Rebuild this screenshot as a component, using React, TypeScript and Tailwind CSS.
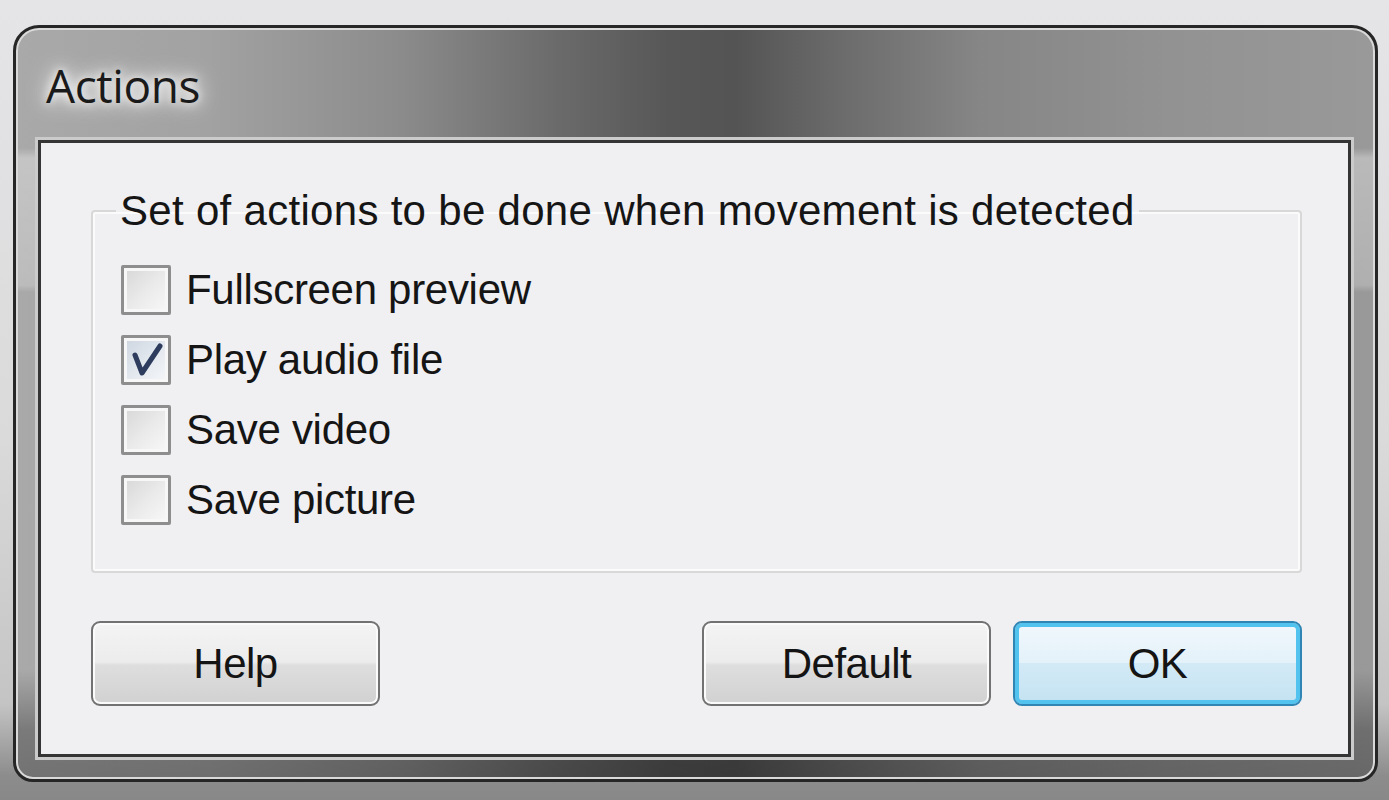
import clsx from "clsx";
import type { ReactNode } from "react";

const ui = "font-['Liberation_Sans',Arial,sans-serif]";

function CheckBox({ checked }: { checked?: boolean }) {
  return (
    <span className="flex h-[50px] w-[50px] shrink-0 rounded-[2px] border-[3px] border-[#8e8e8e] bg-[#f7f7f7] p-[3px]">
      <span
        className={clsx(
          "flex h-full w-full items-center justify-center",
          checked
            ? "bg-[linear-gradient(135deg,#cfd7e1_0%,#e4e9ef_55%,#f3f5f8_100%)]"
            : "bg-[linear-gradient(135deg,#d9d9d9_0%,#ebebeb_55%,#f6f6f6_100%)]"
        )}
      >
        {checked && (
          <svg viewBox="0 0 38 38" className="h-full w-full">
            <path
              d="M8 14 L15 32 L33 5"
              fill="none"
              stroke="#2e3d5e"
              strokeWidth="5"
              strokeLinecap="round"
              strokeLinejoin="round"
            />
          </svg>
        )}
      </span>
    </span>
  );
}

function Option({ label, checked }: { label: string; checked?: boolean }) {
  return (
    <label className="flex h-[70px] items-center gap-[15px]">
      <CheckBox checked={checked} />
      <span className="text-[42px] leading-none tracking-[-0.3px] text-[#151515]">{label}</span>
    </label>
  );
}

function DialogButton({ children, primary }: { children: ReactNode; primary?: boolean }) {
  return (
    <button
      type="button"
      className={clsx(
        "flex h-[85px] w-[289px] items-center justify-center rounded-[9px] border-2 text-[42px] leading-none tracking-[-0.5px] text-[#141414]",
        primary
          ? "border-[#2f86b5] bg-[linear-gradient(to_bottom,#f1f8fc_0%,#e3f1f9_50%,#d3eaf6_50%,#c4e2f2_100%)] shadow-[inset_0_0_0_4px_#52c3ee]"
          : "border-[#727272] bg-[linear-gradient(to_bottom,#f4f4f4_0%,#ececec_48%,#dedede_52%,#d1d1d1_100%)] shadow-[inset_0_0_0_2px_#fbfbfb]"
      )}
    >
      {children}
    </button>
  );
}

export default function App() {
  return (
    <div
      className={clsx(
        "flex min-h-[800px] w-full items-start pl-[13px] pr-[11px] pt-[25px] bg-[linear-gradient(to_bottom,#e5e4e7_0%,#dadada_55%,#c4c4c4_88%,#8c8c8c_97%,#888888_100%)]",
        ui
      )}
    >
      {/* window frame */}
      <div className="flex h-[757px] w-full flex-col rounded-t-[26px] rounded-b-[20px] border-[3px] border-[#262626] bg-[#2a2a2a]">
        <div className="flex flex-1 flex-col rounded-t-[23px] rounded-b-[17px] border-2 border-[#d9d9d9] bg-[linear-gradient(to_bottom,transparent_0px,transparent_640px,rgba(0,0,0,0.28)_700px,rgba(0,0,0,0.32)_100%),linear-gradient(to_bottom,transparent_0px,transparent_118px,rgba(255,255,255,0.32)_128px,rgba(255,255,255,0.22)_255px,transparent_262px),linear-gradient(to_right,#a9a9a9_0%,#a2a2a2_14%,#8c8c8c_28%,#6a6a6a_40%,#575757_48%,#545454_53%,#6c6c6c_61%,#868686_71%,#929292_85%,#999999_100%)] pl-[20px] pr-[22px] pb-[20px]">
          {/* title bar */}
          <div className="flex h-[110px] items-center pl-[8px]">
            <span className="font-['Open_Sans',sans-serif] text-[46px] leading-none tracking-[-0.4px] text-[#1a1a1a] [text-shadow:0_0_10px_#ffffff,0_0_18px_#ffffff,0_0_26px_#f2f2f2]">
              Actions
            </span>
          </div>

          {/* client area */}
          <div className="flex flex-1 flex-col border-[3px] border-[#353535] bg-[#f0eff2] pl-[50px] pr-[46px] shadow-[0_0_0_3px_#cbcbcb]">
            <fieldset className="mt-[44px] h-[386px] rounded-[4px] border-2 border-[#d8d8d8] shadow-[inset_0_0_0_2px_#fbfbfc]">
              <legend className="ml-[23px] px-[4px] text-[42px] leading-[48px] tracking-[0.3px] text-[#151515]">
                Set of actions to be done when movement is detected
              </legend>
              <div className="flex flex-col pl-[28px] pt-[20px]">
                <Option label="Fullscreen preview" />
                <Option label="Play audio file" checked />
                <Option label="Save video" />
                <Option label="Save picture" />
              </div>
            </fieldset>

            <div className="mt-[48px] flex items-center">
              <DialogButton>Help</DialogButton>
              <div className="flex-1" />
              <div className="flex gap-[22px]">
                <DialogButton>Default</DialogButton>
                <DialogButton primary>OK</DialogButton>
              </div>
            </div>
          </div>
        </div>
      </div>
    </div>
  );
}
